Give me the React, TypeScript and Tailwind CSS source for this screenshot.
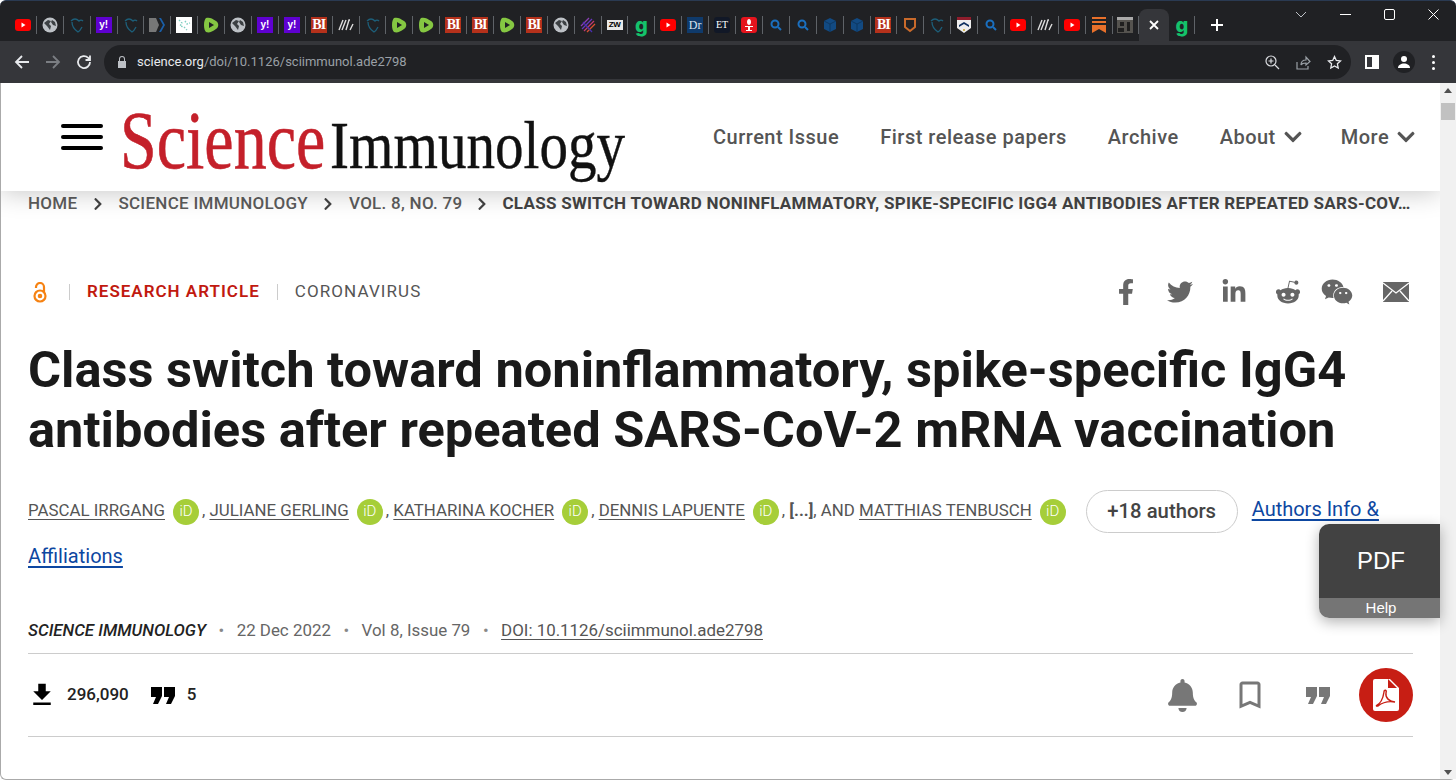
import React from "react";
import { FaFacebookF, FaTwitter, FaLinkedinIn, FaRedditAlien, FaWeixin, FaBell, FaChevronRight, FaChevronDown } from "react-icons/fa";
import { MdBookmarkBorder, MdFileDownload } from "react-icons/md";

const tabs = [
  "yt", "globe", "shield", "yahoo", "shield", "tag", "image", "rumble", "globe", "yahoo", "yahoo", "bi", "lit", "shield",
  "rumble", "rumble", "bi", "bi", "rumble", "bi", "globe", "lines", "zw", "g", "yt", "dr", "et", "mic", "search", "search",
  "cube", "cube", "bi", "oshield", "shield", "penn", "search", "yt", "lit", "yt", "sub", "photo",
];

function Favicon({ kind }: { kind: string }) {
  if (kind === "yt")
    return (
      <svg width="16" height="12" viewBox="0 0 16 12">
        <rect width="16" height="12" rx="3" fill="#f00" />
        <path d="M6.5 3.5v5l4-2.5z" fill="#fff" />
      </svg>
    );
  if (kind === "globe")
    return (
      <svg width="16" height="16" viewBox="0 0 16 16">
        <circle cx="8" cy="8" r="7.5" fill="#bdc1c6" />
        <path d="M2 6l4-3 3 1-2 3 2 2-1 4-3-4zM10 3l3 2 1 4-3-1-2-3z" fill="#3c4043" />
      </svg>
    );
  if (kind === "shield")
    return (
      <svg width="16" height="16" viewBox="0 0 16 16" fill="none" stroke="#1d5f7a" strokeWidth="1.3">
        <path d="M2 4c3-3 6-2 8 0 1-1 3-1 4 0M3 5c0 5 3 8 6 10 2-1 3-3 4-5" />
      </svg>
    );
  if (kind === "yahoo")
    return (
      <div className="flex h-4 w-4 items-center justify-center bg-[#5f01d1] font-['Liberation_Sans',sans-serif] text-[10px] font-bold leading-none text-white">
        y!
      </div>
    );
  if (kind === "tag")
    return (
      <svg width="16" height="16" viewBox="0 0 16 16">
        <path d="M0 1h7l3 7-3 7H0z" fill="#777" />
        <path d="M10 1l4 7-4 7h2l4-7-4-7z" fill="#1a5fa8" />
      </svg>
    );
  if (kind === "image")
    return (
      <svg width="16" height="16" viewBox="0 0 16 16">
        <rect width="16" height="16" fill="#fff" />
        <path d="M3 3l3 3-2 3 4 1 3 3M9 4l2 3 3-1" fill="none" stroke="#7fcfc0" strokeWidth="1.4" strokeDasharray="1.5 1.5" />
      </svg>
    );
  if (kind === "rumble")
    return (
      <svg width="16" height="16" viewBox="0 0 16 16">
        <path d="M3 1c3-1 6 0 10 3 3 2 3 6 0 8-4 3-7 4-10 3-1-1-2-3-2-7s1-6 2-7z" fill="#85c742" />
        <path d="M6 5l5 3-5 3z" fill="#202124" />
      </svg>
    );
  if (kind === "bi")
    return (
      <div className="flex h-4 w-4 items-center justify-center bg-[#b5311b] font-['Liberation_Serif',serif] text-[14px] font-bold leading-none tracking-[-1px] text-white">
        BI
      </div>
    );
  if (kind === "lit")
    return (
      <svg width="16" height="12" viewBox="0 0 16 12" stroke="#ddd" fill="none" strokeWidth="1.4">
        <path d="M1 11L5 1M4 11L8 1M8 11L11 1h1M12 11l3-6" />
      </svg>
    );
  if (kind === "lines")
    return (
      <svg width="16" height="16" viewBox="0 0 16 16" fill="none" strokeWidth="1.2">
        <path d="M1 9l8-8" stroke="#8a3fb5" />
        <path d="M2 12L12 2" stroke="#6a35c0" />
        <path d="M4 14L14 4" stroke="#c23a70" />
        <path d="M7 15l8-8" stroke="#d9502f" />
        <path d="M3 5l9 10" stroke="#4a2fb0" />
      </svg>
    );
  if (kind === "zw")
    return (
      <div className="flex h-[10px] w-4 items-center justify-center bg-[#e8e8e8] font-['Liberation_Sans',sans-serif] text-[8px] font-bold leading-none tracking-[-0.5px] text-black">
        ZW
      </div>
    );
  if (kind === "g")
    return <span className="font-['Inter',sans-serif] text-[20px] font-extrabold leading-none text-[#14c26b]">g</span>;
  if (kind === "dr")
    return (
      <div className="flex h-4 w-4 items-center justify-center bg-[#0f3a6b] font-['Liberation_Serif',serif] text-[12px] leading-none text-[#d8e4f0]">
        Dr
      </div>
    );
  if (kind === "et")
    return (
      <div className="flex h-4 w-4 items-center justify-center rounded-[3px] bg-[#111827] font-['Liberation_Serif',serif] text-[10px] leading-none text-white">
        ET
      </div>
    );
  if (kind === "mic")
    return (
      <svg width="16" height="16" viewBox="0 0 16 16">
        <rect width="16" height="16" rx="3" fill="#e5141d" />
        <path d="M8 2c1 0 2 1 2 3s-1 3-2 3-2-1-2-3 1-3 2-3zM4 9h8v1H4zM7 10h2v3h2v1H5v-1h2z" fill="#fff" />
      </svg>
    );
  if (kind === "search")
    return (
      <svg width="12" height="12" viewBox="0 0 12 12" fill="none" stroke="#1a6fbf" strokeWidth="2">
        <circle cx="5" cy="5" r="3.5" />
        <path d="M8 8l3 3" />
      </svg>
    );
  if (kind === "cube")
    return (
      <svg width="16" height="16" viewBox="0 0 16 16">
        <path d="M8 1l6 3v8l-6 3-6-3V4z" fill="#124a82" />
        <path d="M2 4l6 3 6-3M8 7v8" fill="none" stroke="#0b3359" strokeWidth="0.8" />
      </svg>
    );
  if (kind === "oshield")
    return (
      <svg width="14" height="16" viewBox="0 0 14 16" fill="none" stroke="#c96a2b" strokeWidth="2">
        <path d="M2 2h10v8l-5 4-5-4z" />
      </svg>
    );
  if (kind === "penn")
    return (
      <svg width="14" height="16" viewBox="0 0 14 16">
        <path d="M0 0h14v11l-7 5-7-5z" fill="#eee" />
        <path d="M0 0h14v3H0z" fill="#8f1d2c" />
        <path d="M2 8l5-3 5 3v2L7 7l-5 3z" fill="#10305f" />
        <circle cx="7" cy="13" r="1" fill="#c9a227" />
      </svg>
    );
  if (kind === "sub")
    return (
      <svg width="14" height="16" viewBox="0 0 14 16" fill="#e8702a">
        <path d="M0 0h14v2H0zM0 4h14v2H0zM0 8h14v8l-7-4-7 4z" />
      </svg>
    );
  return (
    <svg width="16" height="16" viewBox="0 0 16 16">
      <rect width="16" height="16" fill="#55534f" />
      <path d="M0 0h16v3H0z" fill="#aaa" />
      <path d="M3 5h4v4H3zM10 5h3v9h-3zM1 11h6v4H1z" fill="#1f1f1f" />
    </svg>
  );
}

function OrcidBadge() {
  return (
    <span className="ml-[8px] mr-[3px] inline-flex h-[26px] w-[26px] items-center justify-center rounded-full bg-[#a6ce39] align-middle text-[15px] font-light leading-none text-white no-underline">
      iD
    </span>
  );
}

function Author({ name }: { name: string }) {
  return <span className="underline decoration-[#555] underline-offset-[3px]">{name}</span>;
}

function QuoteMark({ className }: { className: string }) {
  return (
    <svg className={className} width="24" height="17" viewBox="0 0 24 17" fill="currentColor">
      <path d="M0 0h11v9l-4 8H2l3-7H0zM13 0h11v9l-4 8h-5l3-7h-5z" />
    </svg>
  );
}

export default function App() {
  return (
    <div className="flex h-[780px] w-[1456px] flex-col overflow-hidden bg-white font-['Roboto',sans-serif]">
      {/* browser chrome */}
      <div className="relative flex h-[41px] shrink-0 items-center rounded-t-[6px] border-t border-[#2a3a52] bg-[#202124] pl-[10px] pt-[8px]">
        {tabs.map((t, i) => (
          <div key={i} className="flex h-[18px] w-[26.9px] shrink-0 items-center justify-center border-r border-[#5f6368]">
            <Favicon kind={t} />
          </div>
        ))}
        <div className="flex h-[32px] w-[30px] shrink-0 items-center justify-center rounded-t-[8px] bg-[#35363a]">
          <svg width="12" height="12" viewBox="0 0 12 12" stroke="#fff" strokeWidth="1.8">
            <path d="M2 2l8 8M10 2l-8 8" />
          </svg>
        </div>
        <div className="flex h-[18px] w-[26px] shrink-0 items-center justify-center border-r border-[#5f6368]">
          <Favicon kind="g" />
        </div>
        <svg className="ml-[15px]" width="14" height="14" viewBox="0 0 14 14" stroke="#fff" strokeWidth="2">
          <path d="M7 1v12M1 7h12" />
        </svg>
        <div className="mb-[21px] ml-auto flex items-center">
          <svg className="mr-[33px]" width="12" height="8" viewBox="0 0 12 8" fill="none" stroke="#bdc1c6" strokeWidth="1">
            <path d="M1 1l5 5 5-5" />
          </svg>
          <div className="mr-[33px] h-[1px] w-[11px] bg-white" />
          <div className="mr-[33px] h-[11px] w-[11px] rounded-[2px] border border-white" />
          <svg className="mr-[17px]" width="11" height="11" viewBox="0 0 11 11" stroke="#fff" strokeWidth="1">
            <path d="M0.5 0.5l10 10M10.5 0.5l-10 10" />
          </svg>
        </div>
      </div>
      <div className="flex h-[42px] shrink-0 items-center bg-[#35363a] pl-[14px]">
        <svg width="16" height="16" viewBox="0 0 16 16" fill="none" stroke="#e8eaed" strokeWidth="1.8">
          <path d="M15 8H2M8 2L2 8l6 6" />
        </svg>
        <svg className="ml-[15px]" width="16" height="16" viewBox="0 0 16 16" fill="none" stroke="#7b7e83" strokeWidth="1.8">
          <path d="M1 8h13M8 2l6 6-6 6" />
        </svg>
        <svg className="ml-[15px]" width="16" height="16" viewBox="0 0 16 16" fill="none" stroke="#e8eaed" strokeWidth="1.8">
          <path d="M14 8a6 6 0 1 1-1.8-4.2L14 6M14 1.500V6H9.500" />
        </svg>
        <div className="ml-[12px] flex h-[34px] w-[1247px] items-center rounded-full bg-[#202124] pl-[13px]">
          <svg width="10" height="12" viewBox="0 0 10 12" fill="#bdc1c6">
            <path d="M1 5h8v7H1zM3 5V3a2 2 0 0 1 4 0v2h1V3a3 3 0 0 0-6 0v2z" />
          </svg>
          <span className="ml-[10px] text-[13px] text-[#e8eaed]">science.org</span>
          <span className="text-[13px] text-[#9aa0a6]">/doi/10.1126/sciimmunol.ade2798</span>
          <div className="ml-auto mr-[9px] flex items-center gap-[16px]">
            <svg width="15" height="15" viewBox="0 0 15 15" fill="none" stroke="#dadce0" strokeWidth="1.2">
              <circle cx="6" cy="6" r="5" />
              <path d="M10 10l4 4M6 3.500v5M3.500 6h5" />
            </svg>
            <svg width="15" height="15" viewBox="0 0 15 15" fill="none" stroke="#9aa0a6" strokeWidth="1.2">
              <path d="M1 7v7h11v-3M5 10c0-4 3-5 5-5V2l4 4.500L10 10V8c-2 0-4 0-5 2z" />
            </svg>
            <svg width="15" height="15" viewBox="0 0 15 15" fill="none" stroke="#e8eaed" strokeWidth="1.3">
              <path d="M7.500 1.500l1.800 3.900 4.200.5-3.100 2.900.8 4.200-3.700-2.100-3.700 2.100.8-4.200L1.500 5.900l4.200-.5z" />
            </svg>
          </div>
        </div>
        <div className="ml-[14px] h-[14px] w-[14px] border-[2px] border-white bg-[linear-gradient(to_right,#35363a_55%,white_55%)]" />
        <div className="ml-[14px] flex h-[22px] w-[22px] items-center justify-center rounded-full bg-[#202124]">
          <svg width="14" height="14" viewBox="0 0 14 14" fill="#fff">
            <circle cx="7" cy="4" r="3" />
            <path d="M1 13c0-3 3-4.500 6-4.500s6 1.500 6 4.500z" />
          </svg>
        </div>
        <div className="ml-[17px] flex flex-col gap-[3px]">
          <div className="h-[3px] w-[3px] rounded-full bg-white" />
          <div className="h-[3px] w-[3px] rounded-full bg-white" />
          <div className="h-[3px] w-[3px] rounded-full bg-white" />
        </div>
      </div>

      {/* page */}
      <div className="relative flex min-h-0 flex-1 rounded-b-[6px] border-b border-l border-[#aaa]">
        <div className="min-w-0 flex-1 overflow-hidden">
          <header className="relative z-10 flex h-[108px] items-center bg-white pl-[60px] shadow-[0_2px_24px_rgba(0,0,0,0.22)]">
            <div className="flex w-[42px] flex-col gap-[7px]">
              <div className="h-[4px] rounded-full bg-black" />
              <div className="h-[4px] rounded-full bg-black" />
              <div className="h-[4px] rounded-full bg-black" />
            </div>
            <div className="ml-[17px] mt-[12px] flex items-baseline whitespace-nowrap font-['Liberation_Serif',serif]">
              <span className="inline-block w-[205px] origin-left scale-x-[0.805] text-[82px] leading-[80px] text-[#c4202a] [-webkit-text-stroke:0.6px_#c4202a]">Science</span>
              <span className="ml-[5px] inline-block w-[296px] origin-left scale-x-[0.84] text-[68px] leading-[80px] text-[#111] [-webkit-text-stroke:0.4px_#111]">Immunology</span>
            </div>
            <nav className="ml-[87px] flex items-center text-[20px] font-medium tracking-[0.5px] text-[#555]">
              <span>Current Issue</span>
              <span className="ml-[41px]">First release papers</span>
              <span className="ml-[41px]">Archive</span>
              <span className="ml-[41px]">About</span>
              <FaChevronDown className="ml-[7px] text-[20px]" />
              <span className="ml-[38px]">More</span>
              <FaChevronDown className="ml-[7px] text-[20px]" />
            </nav>
          </header>

          <div className="px-[27px]">
            <div className="flex h-[24px] items-center whitespace-nowrap pt-[1px] text-[17px] font-medium tracking-[0.28px] text-[#5c5c5c]">
              <span>HOME</span>
              <FaChevronRight className="mx-[13.5px] shrink-0 text-[14px] text-[#444]" />
              <span>SCIENCE IMMUNOLOGY</span>
              <FaChevronRight className="mx-[13.5px] shrink-0 text-[14px] text-[#444]" />
              <span>VOL. 8, NO. 79</span>
              <FaChevronRight className="mx-[13px] shrink-0 text-[14px] text-[#444]" />
              <span className="font-bold text-[#444]">CLASS SWITCH TOWARD NONINFLAMMATORY, SPIKE-SPECIFIC IGG4 ANTIBODIES AFTER REPEATED SARS-COV…</span>
            </div>

            <div className="mt-[61px] flex h-[32px] items-center">
              <svg className="ml-[5px]" width="14" height="21" viewBox="0 0 14 21" fill="none" stroke="#f68212" strokeWidth="2.2">
                <circle cx="7" cy="14" r="5.500" />
                <circle cx="7" cy="14" r="1.200" />
                <path d="M3 6V5a4 4 0 0 1 8 0v5" />
              </svg>
              <div className="ml-[22px] h-[16px] w-px bg-[#ccc]" />
              <span className="ml-[17px] text-[17px] font-semibold tracking-[1px] text-[#c1190f]">RESEARCH ARTICLE</span>
              <div className="ml-[17px] h-[16px] w-px bg-[#ccc]" />
              <span className="ml-[17px] text-[17px] tracking-[1.1px] text-[#555]">CORONAVIRUS</span>
              <div className="ml-auto mr-[4px] flex items-center text-[26px] text-[#666]">
                <FaFacebookF />
                <FaTwitter className="ml-[28px]" />
                <FaLinkedinIn className="ml-[28px]" />
                <FaRedditAlien className="ml-[28px]" />
                <FaWeixin className="ml-[20px] text-[32px]" />
                <svg className="ml-[30px]" width="26" height="20" viewBox="0 0 26 20">
                  <path d="M0 0h26v20H0z" fill="#666" />
                  <path d="M0 1l13 10L26 1M0 19l9-10M26 19l-9-10" fill="none" stroke="#fff" strokeWidth="1.300" />
                </svg>
              </div>
            </div>

            <h1 className="mt-[32px] text-[50.600px] font-bold leading-[60px] text-[#1a1a1a]">
              Class switch toward noninflammatory, spike-specific IgG4 antibodies after repeated SARS-CoV-2 mRNA vaccination
            </h1>

            <p className="mt-[26px] text-[16.850px] leading-[46px] text-[#555]">
              <Author name="PASCAL IRRGANG" />
              <OrcidBadge />
              <span>, </span>
              <Author name="JULIANE GERLING" />
              <OrcidBadge />
              <span>, </span>
              <Author name="KATHARINA KOCHER" />
              <OrcidBadge />
              <span>, </span>
              <Author name="DENNIS LAPUENTE" />
              <OrcidBadge />
              <span>, </span>
              <span className="font-bold">[...]</span>
              <span>, AND </span>
              <Author name="MATTHIAS TENBUSCH" />
              <OrcidBadge />
              <span className="ml-[17px] inline-flex h-[43px] w-[152px] items-center justify-center rounded-full border border-[#ccc] align-middle text-[20.300px] font-medium leading-none text-[#444]">
                +18 authors
              </span>
              <a className="ml-[14px] text-[20px] text-[#0d47a1] underline underline-offset-[3px]">Authors Info &amp; Affiliations</a>
            </p>

            <div className="mt-[39px] flex h-[24px] items-center text-[16.900px] text-[#666]">
              <span className="font-medium italic text-[#222]">SCIENCE IMMUNOLOGY</span>
              <span className="mx-[12.500px] text-[#888]">•</span>
              <span>22 Dec 2022</span>
              <span className="mx-[12.500px] text-[#888]">•</span>
              <span>Vol 8, Issue 79</span>
              <span className="mx-[12.500px] text-[#888]">•</span>
              <span className="text-[#555] underline underline-offset-[3px]">DOI: 10.1126/sciimmunol.ade2798</span>
            </div>

            <div className="mt-[10px] flex h-[84px] items-center border-y border-[#ccc]">
              <MdFileDownload className="ml-[-1px] text-[30px] text-black" />
              <span className="ml-[10px] text-[17px] font-medium text-[#222]">296,090</span>
              <QuoteMark className="ml-[22px] text-black" />
              <span className="ml-[12px] text-[17px] font-medium text-[#222]">5</span>
              <div className="ml-auto flex items-center text-[#777]">
                <FaBell className="text-[33px]" />
                <MdBookmarkBorder className="ml-[33px] text-[36px]" />
                <QuoteMark className="ml-[38px]" />
                <div className="ml-[29px] flex h-[54px] w-[54px] items-center justify-center rounded-full bg-[#c71e14]">
                  <svg width="26" height="32" viewBox="0 0 26 32">
                    <path d="M2 0h15l9 9v21a2 2 0 0 1-2 2H2a2 2 0 0 1-2-2V2a2 2 0 0 1 2-2z" fill="#fff" />
                    <path d="M15 0l9 9h-9z" fill="#c71e14" />
                    <path d="M3 27c4-2 7-7 8-14 0-3 3-2 2 1-1 5 4 9 9 9-6-1-12 0-17 4z" fill="none" stroke="#c71e14" strokeWidth="1.400" />
                  </svg>
                </div>
              </div>
            </div>
          </div>
        </div>

        {/* scrollbar */}
        <div className="flex w-[16px] shrink-0 flex-col items-center bg-[#f1f1f1] pt-[5px]">
          <svg width="8" height="5" viewBox="0 0 8 5" fill="#505050">
            <path d="M4 0l4 5H0z" />
          </svg>
          <div className="mt-[10px] h-[17px] w-[14px] bg-[#c1c1c1]" />
          <svg className="mb-[4px] mt-auto" width="8" height="5" viewBox="0 0 8 5" fill="#505050">
            <path d="M4 5L0 0h8z" />
          </svg>
        </div>

        {/* PDF help widget */}
        <div className="absolute right-[16px] top-[441px] flex h-[94px] w-[121px] flex-col overflow-hidden rounded-l-[10px] font-['Liberation_Sans',sans-serif] text-white shadow-[0_4px_14px_rgba(0,0,0,0.3)]">
          <div className="flex flex-1 items-center justify-center bg-[#424242] pl-[3px] text-[24px]">PDF</div>
          <div className="flex h-[20px] items-center justify-center bg-[#757575] pl-[3px] text-[15px]">Help</div>
        </div>
      </div>
    </div>
  );
}
